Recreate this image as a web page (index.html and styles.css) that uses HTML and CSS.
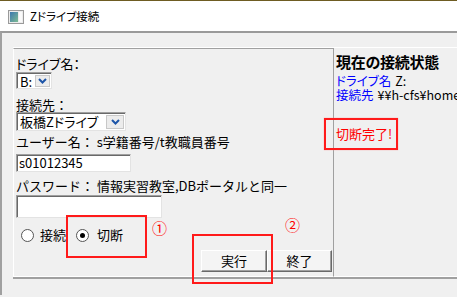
FILE: index.html
```html
<!DOCTYPE html>
<html>
<head>
    <meta charset="utf-8" />
    <title>Zドライブ接続</title>
    <link rel="stylesheet" href="styles.css">
</head>
<body>
    <!-- タイトルバー -->
    <div class="titlebar">
        <svg class="appicon" width="16" height="14" viewBox="0 0 16 14">
            <defs>
                <linearGradient id="g1" x1="0" y1="0" x2="1" y2="1">
                    <stop offset="0" stop-color="#3b78b0" />
                    <stop offset="1" stop-color="#7dbb92" />
                </linearGradient>
            </defs>
            <rect x="0.5" y="0.5" width="15" height="13" fill="#ececec" stroke="#9a9a9a" />
            <rect x="2" y="2" width="8" height="10" fill="url(#g1)" />
            <rect x="11" y="2" width="3" height="10" fill="#fafafa" />
        </svg>
        <span class="title">Zドライブ接続</span>
    </div>

    <div class="window">
        <div class="panel">
            <!-- 入力フォーム -->
            <div class="form">
                <div class="label l1">ドライブ名：</div>
                <div class="combo drive">
                    <span class="val">B:</span>
                    <span class="drop"><svg width="9" height="6" viewBox="0 0 9 6"><polyline points="1,1 4.5,4.5 8,1" fill="none" stroke="#1d55a8" stroke-width="2" /></svg></span>
                </div>
                <div class="label l2">接続先：</div>
                <div class="combo target">
                    <span class="val">板橋Zドライブ</span>
                    <span class="drop"><svg width="9" height="6" viewBox="0 0 9 6"><polyline points="1,1 4.5,4.5 8,1" fill="none" stroke="#1d55a8" stroke-width="2" /></svg></span>
                </div>
                <div class="label l3">ユーザー名：&nbsp;s学籍番号/t教職員番号</div>
                <div class="textbox user">s01012345</div>
                <div class="label l4">パスワード：&nbsp;情報実習教室,DBポータルと同一</div>
                <div class="textbox pass"></div>
                <div class="radios">
                    <span class="radio"></span><span class="rtext">接続</span>
                    <span class="radio checked"></span><span class="rtext">切断</span>
                </div>
                <div class="buttons">
                    <div class="btn">実行</div>
                    <div class="btn">終了</div>
                </div>
            </div>
            <!-- 接続状態 -->
            <div class="status">
                <div class="heading">現在の接続状態</div>
                <div class="line"><span class="key">ドライブ名</span><span class="value">Z:</span></div>
                <div class="line"><span class="key">接続先</span><span class="value">¥¥h-cfs¥home¥t</span></div>
                <div class="result">切断完了!</div>
            </div>
        </div>
    </div>

    <!-- 注釈（赤枠と番号） -->
    <div class="mark box1"></div>
    <div class="mark box2"></div>
    <div class="mark box3"></div>
    <div class="num n1">①</div>
    <div class="num n2">②</div>
</body>
</html>
```

FILE: styles.css
```css
/*全体*/
html,body{
    margin: 0;
    padding: 0;
}
body{
    width: 457px;
    height: 297px;
    overflow: hidden;
    background-color: #f0f0f0;
    font-family: "Noto Sans CJK JP", "Liberation Sans", sans-serif;
    font-size: 13px;
    color: #000;
    position: relative;
}
/*タイトルバー*/
.titlebar{
    height: 30px;
    border-top: 1px solid #6e5c22;
    background-color: #fff;
    display: flex;
    align-items: center;
}
.appicon{
    margin-left: 8px;
    margin-top: 1px;
}
.title{
    margin-left: 6px;
    font-size: 11.5px;
    line-height: 14px;
    font-feature-settings: "palt";
}
/*ウィンドウ本体*/
.window{
    border-top: 2px solid #9a9a9a;
    border-left: 2px solid #a0a0a0;
    padding: 14px 0 0 11px;
    height: 264px;
    box-sizing: border-box;
}
.panel{
    display: flex;
    border-top: 1px solid #fff;
    border-bottom: 2px solid #a0a0a0;
    height: 232px;
    box-sizing: border-box;
}
.form{
    width: 320px;
    border-top: 1px solid #a0a0a0;
    border-left: 1px solid #fff;
    border-bottom: 1px solid #fff;
    padding: 7px 0 0 2px;
    box-sizing: border-box;
    display: flex;
    flex-direction: column;
    align-items: flex-start;
}
.label{
    height: 15px;
    line-height: 15px;
    white-space: nowrap;
}
.l1{ height: 16px; line-height: 16px; font-feature-settings: "palt"; }
.l2{ margin-top: 8px; }
.l3{ margin-top: 3px; }
.l4{ margin-top: 6px; }
/*コンボボックス*/
.combo{
    display: flex;
    align-items: stretch;
    background-color: #fff;
    border: 1px solid;
    border-color: #a0a0a0 #e3e3e3 #e3e3e3 #a0a0a0;
    box-shadow: inset 1px 1px 0 #696969;
    box-sizing: border-box;
    padding: 2px 1px 1px 2px;
}
.combo .val{
    flex: 1;
    line-height: 13px;
    padding-left: 1px;
    white-space: nowrap;
    font-feature-settings: "palt";
}
.combo .drop{
    width: 15px;
    background-color: #ececec;
    border: 1px solid #c8c8c8;
    box-sizing: border-box;
    display: flex;
    align-items: center;
    justify-content: center;
}
.drive{
    width: 36px;
    height: 17px;
}
.target{
    width: 110px;
    height: 19px;
}
.target .drop{
    width: 18px;
}
/*テキストボックス*/
.textbox{
    background-color: #fff;
    border: 1px solid;
    border-color: #a0a0a0 #e3e3e3 #e3e3e3 #a0a0a0;
    box-shadow: inset 1px 1px 0 #696969;
    box-sizing: border-box;
    padding-left: 2px;
    line-height: 15px;
}
.user{
    width: 115px;
    height: 18px;
    margin-top: 5px;
}
.pass{
    width: 146px;
    height: 23px;
    margin-top: 2px;
}
/*ラジオボタン*/
.radios{
    margin-top: 9px;
    height: 16px;
    display: flex;
    align-items: center;
}
.radio{
    width: 13px;
    height: 13px;
    border-radius: 50%;
    border: 1px solid #555;
    background-color: #fff;
    box-sizing: border-box;
    margin-left: 5px;
    position: relative;
}
.radio.checked{
    margin-left: 10px;
}
.radio.checked::after{
    content: "";
    position: absolute;
    left: 3px;
    top: 3px;
    width: 5px;
    height: 5px;
    border-radius: 50%;
    background-color: #000;
}
.rtext{
    margin-left: 6px;
    line-height: 16px;
}
.radio.checked + .rtext{
    margin-left: 8px;
}
/*ボタン*/
.buttons{
    margin-top: 7px;
    align-self: stretch;
    display: flex;
    justify-content: flex-end;
    padding-right: 1px;
}
.btn{
    width: 66px;
    height: 22px;
    line-height: 20px;
    text-align: center;
    background-color: #f4f4f4;
    border: 1px solid;
    border-color: #fff #696969 #696969 #fff;
    box-shadow: inset -1px -1px 0 #a0a0a0;
    box-sizing: border-box;
}
.btn + .btn{
    width: 65px;
}
/*接続状態*/
.status{
    flex: 1;
    border-left: 1px solid #a0a0a0;
    border-bottom: 1px solid #fff;
    padding: 6px 0 0 2px;
    white-space: nowrap;
    overflow: hidden;
}
.heading{
    font-size: 15px;
    font-weight: bold;
    line-height: 16px;
    letter-spacing: -0.3px;
}
.line{
    font-size: 12.5px;
    height: 14px;
    display: flex;
    align-items: center;
    font-feature-settings: "palt";
}
.line span{
    line-height: 14px;
    height: 14px;
    overflow: visible;
}
.heading + .line{
    margin-top: 4px;
}
.key{
    color: #0000ff;
}
.value{
    margin-left: 4px;
}
.result{
    margin-top: 24px;
    color: #ff0000;
    line-height: 15px;
    font-feature-settings: "palt";
}
/*赤枠の注釈*/
.mark{
    position: absolute;
    border: 2px solid #ff1a1a;
    box-sizing: border-box;
}
.box1{ left: 66px; top: 215px; width: 81px; height: 43px; }
.box2{ left: 192px; top: 234px; width: 81px; height: 50px; }
.box3{ left: 324px; top: 118px; width: 74px; height: 32px; box-shadow: 0 0 1px #ff9090; }
.num{
    position: absolute;
    color: #ff0000;
    font-size: 15px;
    line-height: 16px;
}
.n1{ left: 152px; top: 220px; }
.n2{ left: 285px; top: 217px; }
```
